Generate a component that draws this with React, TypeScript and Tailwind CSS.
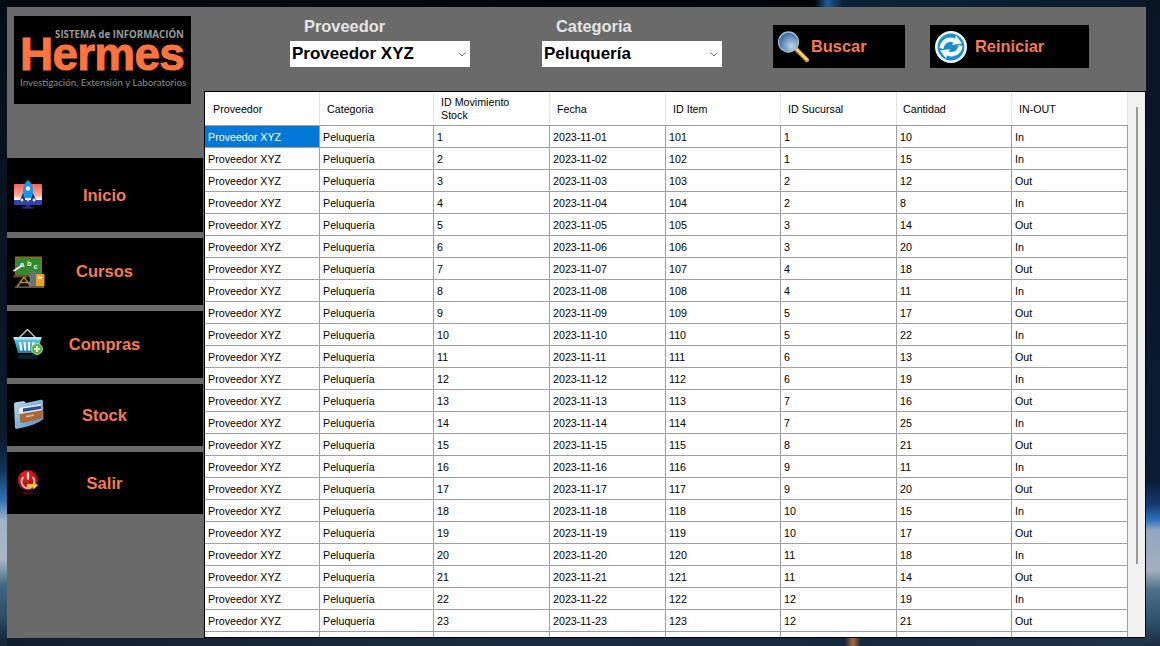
import React from "react";

const sucursal = [1,1,2,2,3,3,4,4,5,5,6,6,7,7,8,9,9,10,10,11,11,12,12];
const cantidad = [10,15,12,8,14,20,18,11,17,22,13,19,16,25,21,11,20,15,17,18,14,19,21];
const cols = "grid grid-cols-[115px_114px_116px_116px_115px_116px_115px_116px]";

const rows = sucursal.map((s, i) => {
  const n = i + 1;
  const io = n <= 2 || n % 2 === 0 ? "In" : "Out";
  return ["Proveedor XYZ", "Peluquería", String(n), `2023-11-${String(n).padStart(2, "0")}`, String(100 + n), String(s), String(cantidad[i]), io];
});

const headers = ["Proveedor", "Categoria", "ID Movimiento Stock", "Fecha", "ID Item", "ID Sucursal", "Cantidad", "IN-OUT"];

function Chevron() {
  return (
    <svg width="8" height="5" viewBox="0 0 8 5" className="shrink-0">
      <path d="M0.5 0.5 L4 4 L7.5 0.5" fill="none" stroke="#777" strokeWidth="1" />
    </svg>
  );
}

function Combo({ value }: { value: string }) {
  return (
    <div className="mt-[5px] flex h-[26px] w-[180px] items-center justify-between bg-white pl-[2px] pr-[4px] text-[17px] font-bold leading-none text-black">
      <span className="pb-[2px]">{value}</span>
      <Chevron />
    </div>
  );
}

function RocketIcon() {
  return (
    <svg width="30" height="30" viewBox="0 0 30 30">
      <defs>
        <linearGradient id="scr" x1="0" y1="0" x2="0" y2="1">
          <stop offset="0" stopColor="#f4605f" />
          <stop offset="0.55" stopColor="#f7b098" />
          <stop offset="0.7" stopColor="#fbf3ea" />
          <stop offset="0.74" stopColor="#fbf3ea" />
          <stop offset="0.76" stopColor="#2f43a8" />
          <stop offset="1" stopColor="#2f43a8" />
        </linearGradient>
      </defs>
      <rect x="1" y="4" width="28" height="21" rx="1" fill="url(#scr)" />
      <rect x="12.5" y="25" width="5" height="2" fill="#223080" />
      <rect x="9" y="27" width="12" height="1.6" fill="#223080" />
      <path d="M7 20 L10 13 L12 13 L12 20Z M23 20 L20 13 L18 13 L18 20Z" fill="#14307f" />
      <path d="M15 0 C19 3 20 8 20 12 L19 18 L11 18 L10 12 C10 8 11 3 15 0Z" fill="#1b93ea" />
      <circle cx="15" cy="8.5" r="2.2" fill="#f0faff" />
      <path d="M13 18 L15 22 L17 18Z" fill="#fdf1d9" />
      <circle cx="9" cy="20" r="1.4" fill="#fbf3ea" />
      <circle cx="21" cy="20" r="1.4" fill="#fbf3ea" />
    </svg>
  );
}

function BoardIcon() {
  return (
    <svg width="32" height="32" viewBox="0 0 32 32">
      <rect x="2" y="0.5" width="27" height="20" rx="1" fill="#8c6a2c" />
      <rect x="3.5" y="2" width="24" height="17" fill="#2f8a30" />
      <text x="7" y="11" fontSize="7.5" fill="#f2f2f2" fontFamily="Liberation Sans, sans-serif" fontWeight="700">a</text>
      <text x="14" y="9.5" fontSize="7.5" fill="#f2f2f2" fontFamily="Liberation Sans, sans-serif" fontWeight="700">b</text>
      <text x="20.5" y="13" fontSize="7.5" fill="#f2f2f2" fontFamily="Liberation Sans, sans-serif" fontWeight="700">c</text>
      <path d="M0.5 15 L9 9.5" stroke="#f4f4f4" strokeWidth="1.8" />
      <rect x="0.5" y="19" width="24" height="2.4" fill="#6b4a1a" />
      <path d="M4 31 L11 21 M18 31 L11 21 M7 26.5 L18 26.5" stroke="#b58a45" strokeWidth="1.5" fill="none" />
      <rect x="22" y="18" width="9.5" height="12.5" rx="1" fill="#e8a22c" />
      <rect x="16.5" y="15.5" width="6.5" height="15" fill="#66737f" />
      <rect x="25" y="20" width="4" height="3" fill="#f6d690" />
      <rect x="2" y="30.5" width="29" height="1.2" fill="#8a7a50" />
    </svg>
  );
}

function BasketIcon() {
  return (
    <svg width="30" height="32" viewBox="0 0 30 32">
      <defs>
        <linearGradient id="bsk" x1="0" y1="0" x2="0" y2="1">
          <stop offset="0" stopColor="#74cfe4" />
          <stop offset="1" stopColor="#1c7ea8" />
        </linearGradient>
      </defs>
      <path d="M6 9 L14.5 0.5 L23 9" fill="none" stroke="#c9c9c9" strokeWidth="1.4" />
      <path d="M0.5 8 H28.5 L25 24 H5 Z" fill="url(#bsk)" />
      <rect x="0.5" y="8" width="28" height="2.6" rx="1" fill="#b7e6f1" />
      <path d="M7 13 L8.5 21.5 M11.5 13 L12.3 21.5 M16 13 L16 21.5 M20.5 13 L19.8 21.5" stroke="#f4fcff" strokeWidth="2.2" />
      <rect x="5" y="26" width="19" height="4" fill="#123744" opacity="0.6" />
      <circle cx="24" cy="20" r="5.5" fill="#5fb13d" stroke="#d5efc6" strokeWidth="0.7" />
      <path d="M24 17 V23 M21 20 H27" stroke="#fff" strokeWidth="1.7" />
    </svg>
  );
}

function FolderIcon() {
  return (
    <svg width="32" height="32" viewBox="0 0 32 32">
      <defs>
        <linearGradient id="fld" x1="0" y1="0" x2="1" y2="1">
          <stop offset="0" stopColor="#b9d9ee" />
          <stop offset="1" stopColor="#4f8dbf" />
        </linearGradient>
      </defs>
      <path d="M1 5 Q1 3.5 3 3.2 L11 2 L13 4 L28 0.8 Q30 0.5 30 2.5 L30.5 20 Q24 26 3.5 30 L2 29Z" fill="url(#fld)" />
      <path d="M6 10 Q6 8.8 8 8.5 L28 5.2 L29 16 L7 21Z" fill="#f5f2ea" />
      <path d="M10 9.5 L28 6.8 L28 10 L10 13Z" fill="#28499b" />
      <path d="M6.5 15 L30 11 L29.5 18 Q28 19.5 25 20.5 L10 24 Q7.5 24.5 7 22Z" fill="#a8683a" />
      <rect x="13" y="16" width="8" height="1.8" transform="rotate(-10 17 17)" fill="#d9b48c" />
    </svg>
  );
}

function PowerIcon() {
  return (
    <svg width="24" height="26" viewBox="0 0 24 26">
      <defs>
        <radialGradient id="pw" cx="0.4" cy="0.25" r="0.85">
          <stop offset="0" stopColor="#f02626" />
          <stop offset="1" stopColor="#7c0505" />
        </radialGradient>
      </defs>
      <circle cx="11" cy="10.5" r="10.2" fill="url(#pw)" />
      <path d="M6.5 7 A6.5 6.5 0 1 0 15.5 7" fill="none" stroke="#c9b5b5" strokeWidth="2" />
      <path d="M11 2.5 V9.5" stroke="#f5ecec" strokeWidth="2.2" />
      <path d="M10 14 H16 V11.5 L21 15.5 L16 19.5 V17 H10Z" fill="#e6d321" />
      <ellipse cx="11" cy="23" rx="7" ry="1" fill="#4a0a0a" />
    </svg>
  );
}

function SearchIcon() {
  return (
    <svg width="32" height="32" viewBox="0 0 32 32">
      <defs>
        <radialGradient id="lens" cx="0.65" cy="0.7" r="0.85">
          <stop offset="0" stopColor="#c4d7e8" />
          <stop offset="0.55" stopColor="#5f8bb8" />
          <stop offset="1" stopColor="#1f5290" />
        </radialGradient>
      </defs>
      <path d="M18 18 L29 29" stroke="#e0a63f" strokeWidth="4.2" strokeLinecap="round" />
      <path d="M19 18.5 L29 28.5" stroke="#f8de95" strokeWidth="1.5" strokeLinecap="round" />
      <circle cx="10.5" cy="11" r="10" fill="url(#lens)" stroke="#a8bdd1" strokeWidth="1.3" />
    </svg>
  );
}

function ResetIcon() {
  return (
    <svg width="32" height="32" viewBox="0 0 32 32">
      <circle cx="16" cy="16" r="16" fill="#f4f8fb" />
      <circle cx="16" cy="16" r="13.4" fill="#1b8fc9" />
      <path d="M4.5 17 C5 9.5 12.5 4.5 20 7.5 L21 4.5 L27 12.5 L17 14 L18.3 11.5 C13 10 9.5 12.5 8.5 18Z" fill="#f4f8fb" />
      <path d="M27.5 15 C27 22.5 19.5 27.5 12 24.5 L11 27.5 L5 19.5 L15 18 L13.7 20.5 C19 22 22.5 19.5 23.5 14Z" fill="#f4f8fb" />
    </svg>
  );
}

const orange = "text-[#f57c4d]";

function Menu({ icon, label, h, iconX = 6 }: { icon: React.ReactNode; label: string; h: string; iconX?: number }) {
  return (
    <div className={`relative flex w-[196px] items-center justify-center bg-black pr-px ${h}`}>
      <span className="absolute top-1/2 -translate-y-1/2" style={{ left: iconX }}>{icon}</span>
      <span className={`text-[16.5px] font-bold ${orange}`}>{label}</span>
    </div>
  );
}

function Logo() {
  return (
    <div className="flex h-[88px] w-[177px] flex-col bg-black pl-[6px] pr-[7px] pt-[14px]">
      <div className="relative z-10 h-[8px] whitespace-nowrap text-right text-[9.7px] font-bold leading-[10px] text-[#9a9a9a] [font-family:'Open_Sans',sans-serif]">SISTEMA de INFORMACIÓN</div>
      <div className="mt-[-3px] h-[38px] whitespace-nowrap text-[46px] font-bold leading-[38px] tracking-[-0.8px] text-[#f9743e] [-webkit-text-stroke:1px_#f9743e]">Hermes</div>
      <div className="mt-[3px] whitespace-nowrap text-[9.75px] leading-[12px] text-[#8c8c8c] [font-family:'Lato',sans-serif]">Investigación, Extensión y Laboratorios</div>
    </div>
  );
}

export default function App() {
  return (
    <div className="flex h-[646px] w-[1160px] overflow-hidden [font-family:'Liberation_Sans',Arial,sans-serif]">
      <div className="h-full w-[7px] shrink-0 bg-[linear-gradient(180deg,#070d18_0px,#0c1a2e_440px,#123458_470px,#2f70b0_500px,#9fb4c8_520px,#a9b7c4_560px,#3f6a85_585px,#2a4a60_620px,#16273a_640px)]" />
      <div className="flex h-full w-[1139px] shrink-0 flex-col">
        <div className="h-[7px] shrink-0 bg-[linear-gradient(90deg,#050a12_0px,#02040a_808px,#1f5a94_820px,#0d2238_836px,#0c1a2b_1139px)]" />
        <div className="flex h-[631px] shrink-0 bg-[#6a6a6a]">
          <aside className="w-[197px] shrink-0 pt-[9px]">
            <div className="pl-[7px]"><Logo /></div>
            <div className="mt-[54px] flex flex-col">
              <Menu h="h-[74px]" label="Inicio" icon={<RocketIcon />} />
              <div className="h-[6px]" />
              <Menu h="h-[67px]" label="Cursos" icon={<BoardIcon />} />
              <div className="h-[6px]" />
              <Menu h="h-[67px]" label="Compras" icon={<BasketIcon />} />
              <div className="h-[6px]" />
              <Menu h="h-[62px]" label="Stock" icon={<FolderIcon />} />
              <div className="h-[6px]" />
              <Menu h="h-[62px]" label="Salir" icon={<PowerIcon />} iconX={10} />
            </div>
          </aside>
          <main className="flex w-[942px] shrink-0 flex-col">
            <div className="flex h-[84px] shrink-0 pl-[86px]">
              <div className="pt-[9px]">
                <div className="pl-[14px] text-[16.4px] font-bold leading-[20px] text-[#e4e4e4]">Proveedor</div>
                <Combo value="Proveedor XYZ" />
              </div>
              <div className="ml-[72px] pt-[9px]">
                <div className="pl-[14px] text-[16.4px] font-bold leading-[20px] text-[#e4e4e4]">Categoria</div>
                <Combo value="Peluquería" />
              </div>
              <div className="ml-[51px] mt-[18px] flex h-[43px] w-[132px] items-center bg-black pl-[5px]">
                <SearchIcon />
                <span className={`ml-px text-[16.4px] font-bold ${orange}`}>Buscar</span>
              </div>
              <div className="ml-[25px] mt-[18px] flex h-[43px] w-[159px] items-center bg-black pl-[5px]">
                <ResetIcon />
                <span className={`ml-[8px] text-[16.4px] font-bold ${orange}`}>Reiniciar</span>
              </div>
            </div>
            <div className="flex h-[547px] border border-black bg-white text-[10.7px] leading-none text-black">
              <div className="h-full w-[923px] shrink-0 overflow-hidden">
                <div className={`${cols} h-[34px] border-b border-[#a0a0a0]`}>
                  {headers.map((h, i) => (
                    <div key={h} className={`flex items-center border-r border-[#e3e3e3] pt-px leading-[13px] ${i === 0 ? "pl-[8px]" : i === 6 ? "pl-[6px]" : "pl-[7px]"} ${i === 2 ? "pr-[20px]" : ""}`}>
                      {h}
                    </div>
                  ))}
                </div>
                {rows.map((r, ri) => (
                  <div key={ri} className={`${cols} h-[22px] border-b border-[#a0a0a0]`}>
                    {r.map((c, ci) => (
                      <div key={ci} className={`flex items-center border-r border-[#a0a0a0] pl-[3px] pt-[2px] ${ri === 0 && ci === 0 ? "bg-[#0078d7] text-white" : ""}`}>
                        {c}
                      </div>
                    ))}
                  </div>
                ))}
                <div className={`${cols} h-[22px]`}>
                  {headers.map((h) => (
                    <div key={h} className="border-r border-[#a0a0a0]" />
                  ))}
                </div>
              </div>
              <div className="flex h-full w-[17px] shrink-0 justify-center bg-[#f0f0f0] pt-[15px]">
                <div className="h-[457px] w-[2px] bg-[#9a9a9a]" />
              </div>
            </div>
          </main>
        </div>
        <div className="h-[8px] shrink-0 bg-[linear-gradient(90deg,#121e2e_0px,#1b2c40_500px,#16283c_838px,#a8683a_846px,#16283c_854px,#1f3348_1139px)]" />
      </div>
      <div className="h-full w-[14px] shrink-0 bg-[linear-gradient(180deg,#0a1524_0px,#0a1b33_480px,#153a70_505px,#2f70c0_520px,#8fa5bf_530px,#a5b0bf_570px,#4d7088_590px,#2b4c66_625px,#1a2c40_646px)]" />
    </div>
  );
}
